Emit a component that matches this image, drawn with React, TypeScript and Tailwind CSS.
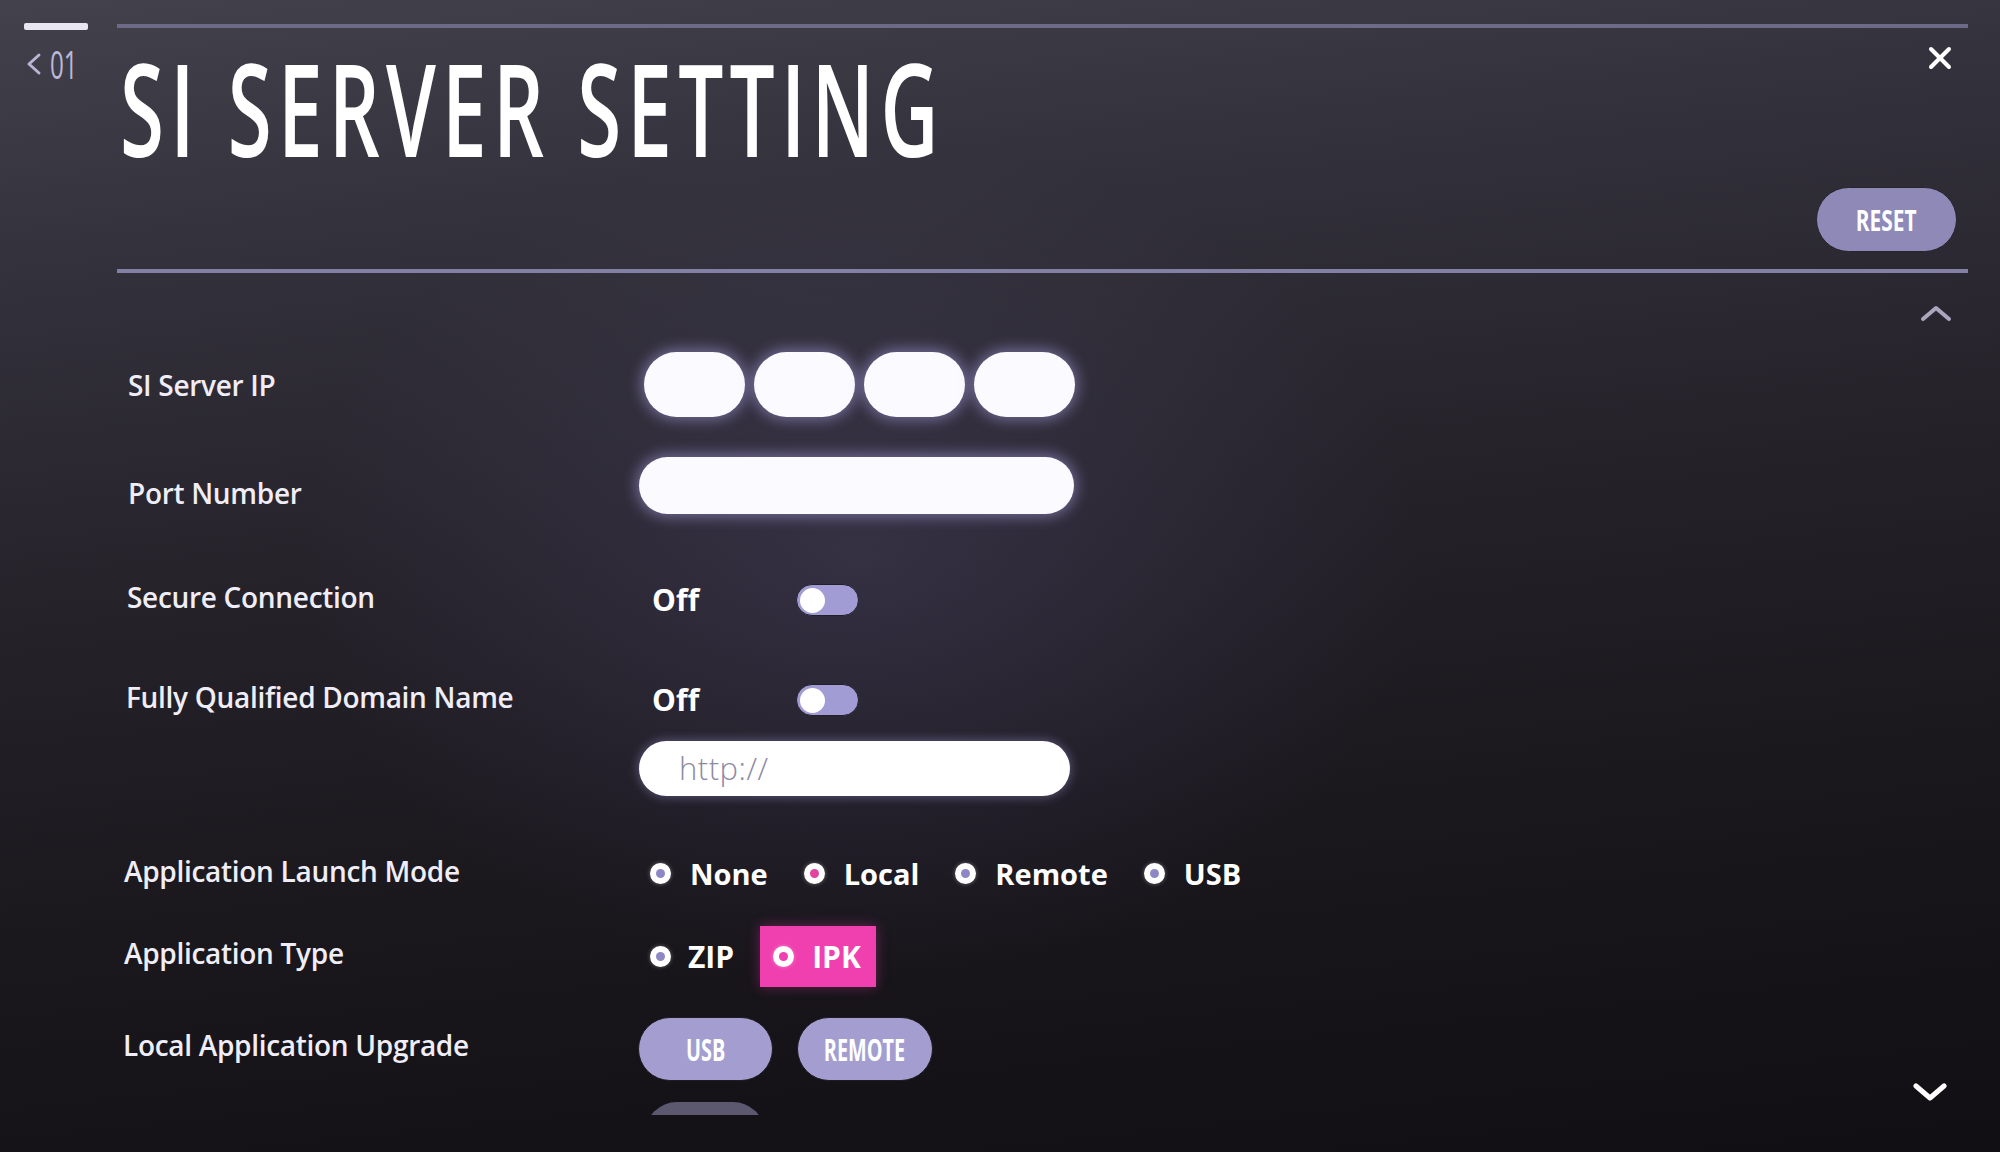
import React from "react";

function Radio({ selected = false, dot = "bg-[#8d87c6]" }: { selected?: boolean; dot?: string }) {
  return (
    <span className="flex h-[21px] w-[21px] shrink-0 items-center justify-center rounded-full bg-white shadow-[0_0_4px_rgba(255,255,255,0.35)]">
      <span className={`h-[9px] w-[9px] rounded-full ${selected ? "bg-[#e0449f]" : dot}`} />
    </span>
  );
}

function Toggle() {
  return (
    <div className="flex h-[32px] w-[63px] items-center rounded-full border border-[#22202a] bg-[#a19cd3] px-[3px]">
      <div className="h-[25px] w-[25px] rounded-full bg-white" />
    </div>
  );
}

function Label({ children, extra = "" }: { children: React.ReactNode; extra?: string }) {
  return (
    <div className={`w-[513px] shrink-0 text-[28px] font-semibold leading-none tracking-[-0.3px] text-[#efedf7] ${extra}`}>
      {children}
    </div>
  );
}

function PillButton({ children, w }: { children: React.ReactNode; w: string }) {
  return (
    <div className={`flex h-[64px] ${w} items-center justify-center rounded-full border border-[#1d1b24] bg-[#a39ecf]`}>
      <span className="inline-block scale-x-[0.64] text-[31px] font-bold leading-none text-white">{children}</span>
    </div>
  );
}

export default function App() {
  const launch = ["None", "Local", "Remote", "USB"];
  return (
    <div className="relative h-[1152px] w-[2000px] overflow-hidden bg-[linear-gradient(174deg,#43424c_0%,#33313b_20%,#25222a_45%,#1a171d_70%,#110f13_100%)] font-['Open_Sans',sans-serif] text-[#efedf7]">
      <div className="pointer-events-none absolute inset-0 bg-[radial-gradient(ellipse_560px_420px_at_860px_560px,rgba(120,110,170,0.2),transparent)]" />
      <div className="relative">
        {/* Header */}
        <div className="flex">
          <div className="w-[117px] shrink-0 pl-[24px] pt-[23px]">
            <div className="h-[7px] w-[64px] rounded-[2px] bg-[#e8e6f1]" />
            <div className="mt-[14px] flex items-center gap-[8px] pl-[2px]">
              <svg width="16" height="26" viewBox="0 0 16 26" fill="none">
                <polyline points="13,4 3,13 13,22" stroke="#b9b5d5" strokeWidth="3" strokeLinecap="round" strokeLinejoin="round" />
              </svg>
              <span className="inline-block origin-left scale-x-[0.62] text-[39px] font-normal leading-none text-[#bcb8d8]">01</span>
            </div>
          </div>
          <div className="flex-1 pr-[32px] pt-[24px]">
            <div className="h-[4px] bg-[#6c6a87]" />
            <div className="flex items-start justify-between">
              <h1 className="ml-[3px] mt-[15px] origin-left scale-x-[0.62] whitespace-nowrap text-[129px] font-semibold leading-none tracking-[10px] text-white">
                SI SERVER SETTING
              </h1>
              <svg className="mr-[16px] mt-[18px]" width="24" height="24" viewBox="0 0 24 24" fill="none">
                <line x1="3" y1="3" x2="21" y2="21" stroke="white" strokeWidth="4" strokeLinecap="round" />
                <line x1="21" y1="3" x2="3" y2="21" stroke="white" strokeWidth="4" strokeLinecap="round" />
              </svg>
            </div>
            <div className="mt-[15px] flex justify-end pr-[11px]">
              <div className="flex h-[65px] w-[141px] items-center justify-center rounded-full border border-[#26242d] bg-[#8e89b7]">
                <span className="inline-block scale-x-[0.72] text-[29px] font-bold leading-none text-white">RESET</span>
              </div>
            </div>
            <div className="mt-[17px] h-[4px] bg-[#8380a5]" />
          </div>
        </div>

        {/* Content */}
        <div className="flex flex-col pl-[126px] pt-[79px]">
          <div className="flex h-[65px] items-center">
            <Label extra="pl-[2px]">SI Server IP</Label>
            <div className="ml-[5px] flex gap-[9px]">
              {[0, 1, 2, 3].map((i) => (
                <div key={i} className="h-[65px] w-[101px] rounded-full bg-[#fbfaff] shadow-[0_0_14px_3px_rgba(190,180,255,0.45)]" />
              ))}
            </div>
          </div>

          <div className="mt-[40px] flex h-[57px] items-center">
            <Label extra="pt-[14px] pl-[2px]">Port Number</Label>
            <div className="h-[57px] w-[435px] rounded-full bg-[#fbfaff] shadow-[0_0_14px_3px_rgba(190,180,255,0.45)]" />
          </div>

          <div className="mt-[70px] flex h-[32px] items-center">
            <Label extra="pb-[6px] pl-[1px]">Secure Connection</Label>
            <span className="w-[157px] pl-[13px] text-[30px] font-bold leading-none text-white">Off</span>
            <Toggle />
          </div>

          <div className="mt-[68px] flex h-[32px] items-center">
            <Label extra="pb-[6px]">Fully Qualified Domain Name</Label>
            <span className="w-[157px] pl-[13px] text-[30px] font-bold leading-none text-white">Off</span>
            <Toggle />
          </div>

          <div className="mt-[25px] flex h-[55px] items-center">
            <div className="w-[513px] shrink-0" />
            <div className="flex h-[55px] w-[431px] items-center rounded-full bg-white pl-[40px] shadow-[0_0_10px_2px_rgba(190,180,255,0.3)]">
              <span className="text-[31px] font-light leading-none tracking-[0.5px] text-[#8d8aa4]">http://</span>
            </div>
          </div>

          <div className="mt-[57px] flex h-[40px] items-center">
            <Label extra="-ml-[2px] mr-[2px] pb-[4px]">Application Launch Mode</Label>
            <div className="ml-[11px] flex items-center gap-[36px]">
              {launch.map((l) => (
                <div key={l} className="flex items-center gap-[19px]">
                  <Radio selected={l === "Local"} />
                  <span className="text-[29px] font-bold leading-none text-white">{l}</span>
                </div>
              ))}
            </div>
          </div>

          <div className="mt-[33px] flex h-[61px] items-center">
            <Label extra="-ml-[2px] mr-[2px] pb-[7px]">Application Type</Label>
            <div className="ml-[11px] flex items-center">
              <div className="flex items-center gap-[17px]">
                <Radio />
                <span className="text-[30px] font-bold leading-none text-white">ZIP</span>
              </div>
              <div className="ml-[26px] flex h-[61px] items-center gap-[18px] bg-[#f03fae] pl-[13px] pr-[15px] shadow-[0_0_12px_rgba(240,63,174,0.35)]">
                <Radio dot="bg-[#f03fae]" />
                <span className="text-[30px] font-bold leading-none text-white">IPK</span>
              </div>
            </div>
          </div>

          <div className="mt-[30px] flex h-[64px] items-center">
            <Label extra="-ml-[3px] mr-[3px] pb-[9px]">Local Application Upgrade</Label>
            <div className="-ml-[1px] flex gap-[24px]">
              <PillButton w="w-[135px]">USB</PillButton>
              <PillButton w="w-[136px]">REMOTE</PillButton>
            </div>
          </div>

          <div className="mt-[21px] flex h-[13px] overflow-hidden">
            <div className="w-[519px] shrink-0" />
            <div className="h-[64px] w-[120px] rounded-full bg-[#5b5870]" />
          </div>
        </div>
      </div>

      {/* scroll indicators */}
      <svg className="absolute left-[1920px] top-[305px]" width="32" height="17" viewBox="0 0 32 17" fill="none">
        <polyline points="3,14 16,3 29,14" stroke="#a9a6bd" strokeWidth="4" strokeLinecap="round" strokeLinejoin="round" />
      </svg>
      <svg className="absolute left-[1913px] top-[1083px]" width="34" height="19" viewBox="0 0 34 19" fill="none">
        <polyline points="3,3 17,15 31,3" stroke="white" strokeWidth="5" strokeLinecap="round" strokeLinejoin="round" />
      </svg>
    </div>
  );
}
